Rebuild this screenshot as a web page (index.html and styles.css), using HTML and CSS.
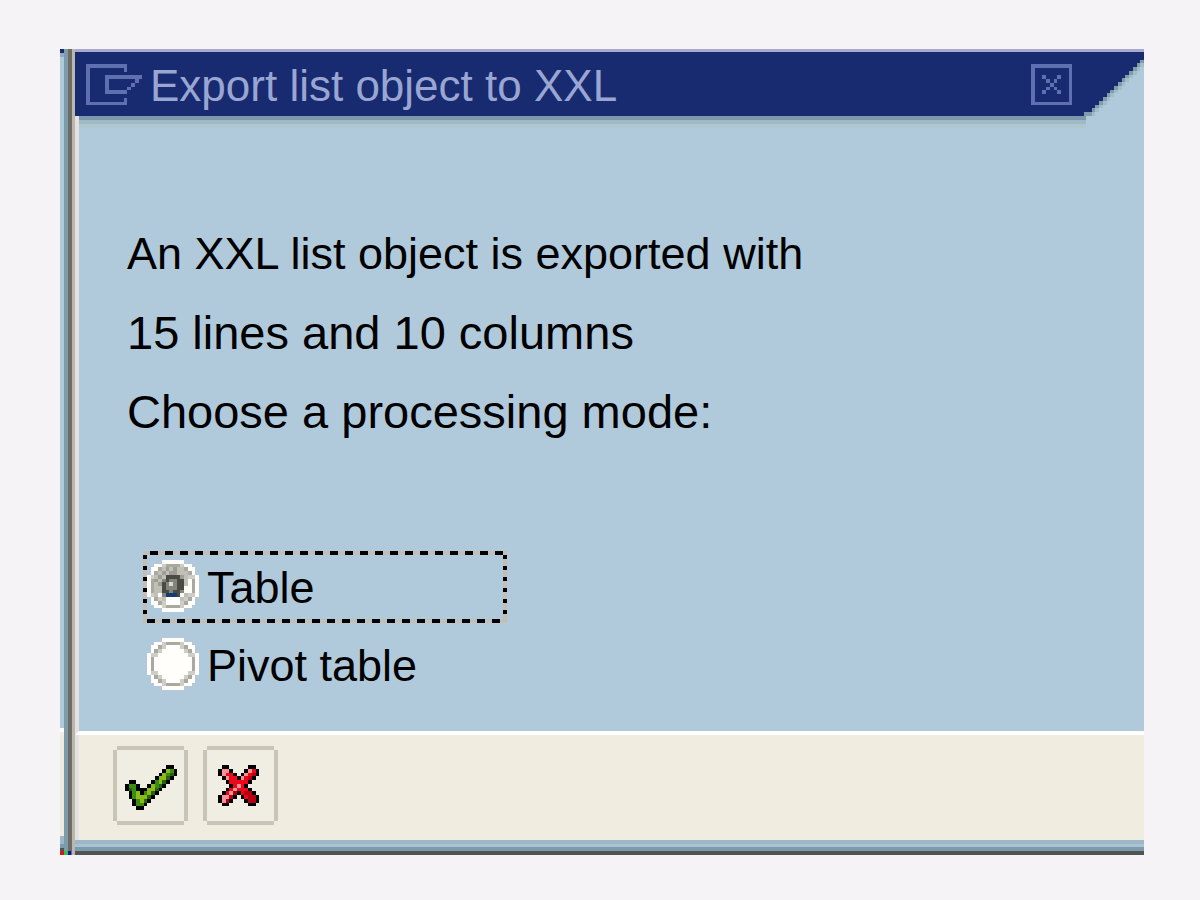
FILE: index.html
```
<!DOCTYPE html>
<html lang="en">
<head>
  <meta charset="UTF-8" />
  <meta name="viewport" content="width=device-width, initial-scale=1.0"/>
  <title>Export list object to XXL</title>
  <link rel="stylesheet" href="styles.css">
</head>
<body>
  <div class="screen">
    <!-- window behind the dialog -->
    <div class="behind">
      <div class="behind-title"></div>
      <div class="behind-body"></div>
      <div class="behind-footer"></div>
      <div class="behind-bottom"></div>
      <div class="behind-dots"></div>
    </div>
    <div class="edge"></div>

    <form class="dialog">
      <div class="titlebar">
        <svg class="title-icon" viewBox="0 0 16 12" shape-rendering="crispEdges">
          <path d="M10.5 2V.5H.5v10h10V9M5.5 3v5M5 3.5h10M5 7.5h6M13 4.5h1M12 5.5h1M11 6.5h1" />
        </svg>
        <h1>Export list object to XXL</h1>
        <button type="button" class="close" aria-label="Close">
          <svg viewBox="0 0 12 12" shape-rendering="crispEdges">
            <path d="M.5 .5h10v10h-10z" />
            <path d="M3 3.5h1M7 3.5h1M4 4.5h1M6 4.5h1M5 5.5h1M4 6.5h1M6 6.5h1M3 7.5h1M7 7.5h1" />
          </svg>
        </button>
        <svg class="corner" viewBox="0 0 16 17" preserveAspectRatio="none" shape-rendering="crispEdges">
          <rect fill="#b0cadb" width="16" height="17" />
          <path fill="#a0bdcb" d="M16 4h-1v1h-1v1h-1v1h-1v1h-1v1h-1v1h-1v1h-1v1h-1v1h-1v1h-1v1h-1v1h-1v1H0V0h16z" />
          <path fill="#7f9ca9" d="M16 3h-1v1h-1v1h-1v1h-1v1h-1v1h-1v1h-1v1h-1v1h-1v1h-1v1h-1v1h-1v1h-1v1h-1v1H0V0h16z" />
          <path fill="#182a70" d="M16 2h-1v1h-1v1h-1v1h-1v1h-1v1h-1v1h-1v1h-1v1h-1v1h-1v1h-1v1h-1v1h-1v1h-1v1H0V0h16z" />
        </svg>
      </div>

      <div class="content">
        <div class="message">
          <p class="lead">An XXL list object is exported with</p>
          <p>15 lines and 10 columns</p>
          <p>Choose a processing mode:</p>
        </div>

        <div class="options">
          <label class="option focused">
            <input type="radio" name="mode" value="table" checked>
            <svg viewBox="0 0 14 14" shape-rendering="crispEdges">
              <path fill="#fffefa" d="M4 0h6v1h2v1h1v2h1v6h-1v2h-1v1h-2v1H4v-1H2v-1H1v-2H0V4h1V2h1V1h2z" />
              <path stroke="#cfcec6" d="M4 1.5h6M3 2.5h2M9 2.5h2M2 3.5h2M10 3.5h2M1 4.5h2M11 4.5h2M1 9.5h2M11 9.5h2M2 10.5h2M10 10.5h2M3 11.5h2M9 11.5h2M4 12.5h6" />
              <path stroke="#aaa9a0" d="M5 1.5h4M3 2.5h1M10 2.5h1M2 3.5h1M11 3.5h1M1 5.5h1M12 5.5h1M1 6.5h1M12 6.5h1M1 7.5h1M12 7.5h1M1 8.5h1M12 8.5h1M2 10.5h1M11 10.5h1M3 11.5h1M10 11.5h1M5 12.5h4" />
              <g class="dot">
                <path stroke="#c0c0b7" d="M4 2.5h6M3 3.5h8M2 4.5h3M9 4.5h2M2 5.5h2M10 5.5h1M2 6.5h2M10 6.5h1M2 7.5h2M2 8.5h2M2 9.5h1M10 9.5h1M4 10.5h1M9 10.5h1" />
                <path stroke="#9c9d95" d="M5 2.5h1M7 2.5h1M4 3.5h1M6 3.5h2M3 4.5h1M9 4.5h1M2 5.5h1M3 6.5h1" />
                <path stroke="#4a4b43" d="M5 4.5h4M4 5.5h6M4 6.5h6M4 7.5h6M4 8.5h6M4 9.5h5" />
                <path stroke="#83847b" d="M4 5.5h1M6 5.5h2M5 6.5h3M5 7.5h3M6 8.5h1M4 9.5h1M9 8.5h1" />
                <path stroke="#d8d8d1" d="M6 6.5h1" />
                <path stroke="#173a70" d="M5 9.5h3" />
              </g>
            </svg>
            <span>Table</span>
          </label>
          <label class="option">
            <input type="radio" name="mode" value="pivot">
            <svg viewBox="0 0 14 14" shape-rendering="crispEdges">
              <path fill="#fffefa" d="M4 0h6v1h2v1h1v2h1v6h-1v2h-1v1h-2v1H4v-1H2v-1H1v-2H0V4h1V2h1V1h2z" />
              <path stroke="#cfcec6" d="M4 1.5h6M3 2.5h2M9 2.5h2M2 3.5h2M10 3.5h2M1 4.5h2M11 4.5h2M1 9.5h2M11 9.5h2M2 10.5h2M10 10.5h2M3 11.5h2M9 11.5h2M4 12.5h6" />
              <path stroke="#aaa9a0" d="M5 1.5h4M3 2.5h1M10 2.5h1M2 3.5h1M11 3.5h1M1 5.5h1M12 5.5h1M1 6.5h1M12 6.5h1M1 7.5h1M12 7.5h1M1 8.5h1M12 8.5h1M2 10.5h1M11 10.5h1M3 11.5h1M10 11.5h1M5 12.5h4" />
              <g class="dot">
                <path stroke="#4a4b43" d="M5 4.5h4M4 5.5h6M4 6.5h6M4 7.5h6M4 8.5h6M5 9.5h4" />
              </g>
            </svg>
            <span>Pivot table</span>
          </label>
        </div>
      </div>

      <div class="footer">
        <button type="submit" class="tool" aria-label="Continue">
          <svg class="check" viewBox="0 0 16 12" shape-rendering="crispEdges">
            <g transform="translate(1 0)">
              <path stroke="#000" d="M11 .5h2M10 1.5h4M9 2.5h5M8 3.5h5M1 4.5h2M7 4.5h5M0 5.5h4M6 5.5h5M0 6.5h10M1 7.5h8M1 8.5h7M2 9.5h5M2 10.5h4M3 11.5h2" />
              <path stroke="#398d12" d="M11 1.5h2M10 2.5h3M9 3.5h3M8 4.5h3M1 5.5h2M7 5.5h3M1 6.5h2M6 6.5h3M2 7.5h2M5 7.5h3M2 8.5h5M3 9.5h3M3 10.5h2" />
              <path stroke="#8dbb15" d="M11 1.5h1M10 2.5h1M9 3.5h2M9 4.5h1M7 5.5h1M6 6.5h2M3 7.5h1M6 7.5h1M3 8.5h3M4 9.5h1" />
              <path stroke="#256211" d="M12 2.5h1M11 3.5h1M10 4.5h1M9 5.5h1M8 6.5h1M7 7.5h1M6 8.5h1M5 9.5h1M1 6.5h1" />
            </g>
          </svg>
        </button>
        <button type="button" class="tool" aria-label="Cancel">
          <svg class="cross" viewBox="0 0 12 12" shape-rendering="crispEdges">
            <path stroke="#000" d="M1 .5h2M8 .5h2M0 1.5h4M7 1.5h4M0 2.5h5M6 2.5h5M1 3.5h9M2 4.5h7M3 5.5h5M2 6.5h7M1 7.5h9M0 8.5h5M6 8.5h5M0 9.5h4M7 9.5h4M1 10.5h2M8 10.5h2" />
            <path stroke="#ee0719" d="M1 1.5h2M8 1.5h2M1 2.5h3M7 2.5h3M2 3.5h3M6 3.5h3M3 4.5h5M4 5.5h3M3 6.5h5M2 7.5h3M6 7.5h3M1 8.5h3M7 8.5h3M1 9.5h2M8 9.5h2" />
            <path stroke="#ff8f94" d="M1 1.5h2M8 1.5h1M1 2.5h1M7 2.5h1M2 3.5h1M6 3.5h1M5 5.5h1M4 6.5h1M3 7.5h1M1 8.5h2M1 9.5h1" />
            <path stroke="#b50013" d="M9 2.5h1M8 3.5h1M4 7.5h1M7 7.5h2M8 8.5h2M8 9.5h2M3 8.5h1M2 9.5h1" />
          </svg>
        </button>
      </div>
      <div class="bottom-edge"></div>
    </form>
  </div>
</body>
</html>
```
FILE: styles.css
```
* {
  box-sizing: border-box;
}
body {
  margin: 0;
  background-color: #f5f3f6;
  font-family: Arial, "Liberation Sans", sans-serif;
  font-size: 45px;
  color: #000;
}
h1, p {
  margin: 0;
  font-size: inherit;
  font-weight: normal;
}
button {
  padding: 0;
  border: none;
  background: none;
  cursor: pointer;
}
svg {
  display: block;
  flex: none;
  fill: none;
  stroke-width: 1;
}
.screen {
  display: flex;
  min-height: 100vh;
  padding: 49px 56px 45px 60px;
}

/* strip of the window behind */
.behind {
  display: flex;
  flex-direction: column;
  width: 4px;
}
.behind-title {
  height: 4px;
  background-color: #182a70;
}
.behind-body {
  flex: 1;
  background-color: #aecbdc;
  border-top: 4px solid #8fabba;
  border-bottom: 4px solid #fff;
}
.behind-footer {
  height: 104px;
  background-color: #f0ecdf;
}
.behind-bottom {
  height: 15px;
  background: linear-gradient(#9db6c8 8px, #7e9bad 8px 12px, #4e5551 12px);
}
.behind-dots {
  width: 11px;
  height: 4px;
  background: linear-gradient(to right, #e01020 4px, #28c840 4px 8px, #1010c0 8px);
  z-index: 1;
}
.edge {
  width: 11px;
  background: linear-gradient(to right, #7d9bab 4px, #6d6d66 4px 8px, #bab6b0 8px);
}

.dialog {
  display: flex;
  flex-direction: column;
  flex: 1;
  min-width: 0;
}
.titlebar {
  display: flex;
  height: 67px;
  padding-left: 11px;
  border-top: 3px solid #a9a9cf;
  background-color: #182a70;
  color: #9aa6d2;
}
.title-icon {
  width: 60px;
  height: 45px;
  margin-top: 12px;
  stroke: #5f70b0;
}
.titlebar h1 {
  flex: 1;
  margin-left: 4px;
  font-size: 44px;
  line-height: 68px;
  white-space: nowrap;
}
.close {
  align-self: flex-start;
  margin: 12px 8px 0 0;
  stroke: #5f70b0;
}
.close svg {
  width: 45px;
  height: 45px;
}
.corner {
  width: 60px;
  height: 64px;
}

/* the first background layer is the shadow under the title bar */
.content {
  flex: 1;
  padding: 98px 48px 30px 48px;
  border-left: 4px solid #e4e2de;
  border-bottom: 4px solid #fff;
  background: linear-gradient(#7d98ac 4px, #a1b9c4 4px 8px, #adc7d1 8px 12px, transparent 12px) no-repeat 0 0 / calc(100% - 58px) 100%, #b0cadb;
}
.message {
  font-size: 47px;
  line-height: 79px;
}
.message .lead {
  font-size: 45px;
}
.options {
  display: flex;
  flex-direction: column;
  align-items: flex-start;
  gap: 6px;
  padding: 100px 0 0 16px;
}
.option {
  position: relative;
  display: flex;
  align-items: center;
  gap: 8px;
  width: 364px;
  height: 72px;
  padding: 0 0 2px 4px;
}
.option span {
  padding-top: 4px;
}
.option svg {
  width: 52px;
  height: 52px;
}
.option input {
  position: absolute;
  left: 4px;
  width: 52px;
  height: 52px;
  margin: 0;
  opacity: 0;
}
.option .dot {
  display: none;
}
.option input:checked + svg .dot {
  display: inline;
}
/* dotted focus frame */
.focused {
  background:
    repeating-linear-gradient(to right, #c4bfb6 0 7px, #000 7px 15px) 0 0 / 100% 4px no-repeat,
    repeating-linear-gradient(to right, #c4bfb6 0 4px, #000 4px 12px, #c4bfb6 12px 15px) 0 100% / 100% 4px no-repeat,
    repeating-linear-gradient(#000 0 4px, #c4bfb6 4px 11px) 0 4px / 4px 64px no-repeat,
    repeating-linear-gradient(#000 0 4px, #c4bfb6 4px 11px) 100% 4px / 4px 64px no-repeat;
}

.footer {
  display: flex;
  gap: 23px;
  padding: 15px 38px 19px;
  border-left: 4px solid #e4e2de;
  background-color: #f0ecdf;
}
.tool {
  display: flex;
  justify-content: center;
  align-items: center;
  width: 67px;
  height: 71px;
  padding-top: 4px;
  background-color: #f0ede2;
  box-shadow: 0 -4px #c8c4b8, 0 4px #c8c4b8, -4px 0 #c8c4b8, 4px 0 #c8c4b8;
}
.check {
  width: 60px;
  height: 45px;
}
.cross {
  width: 45px;
  height: 45px;
}
.bottom-edge {
  height: 15px;
  background: linear-gradient(#9db6c8 4px, #a9c4d1 4px 7px, #7e9bad 7px 11px, #4e5551 11px);
}
```
